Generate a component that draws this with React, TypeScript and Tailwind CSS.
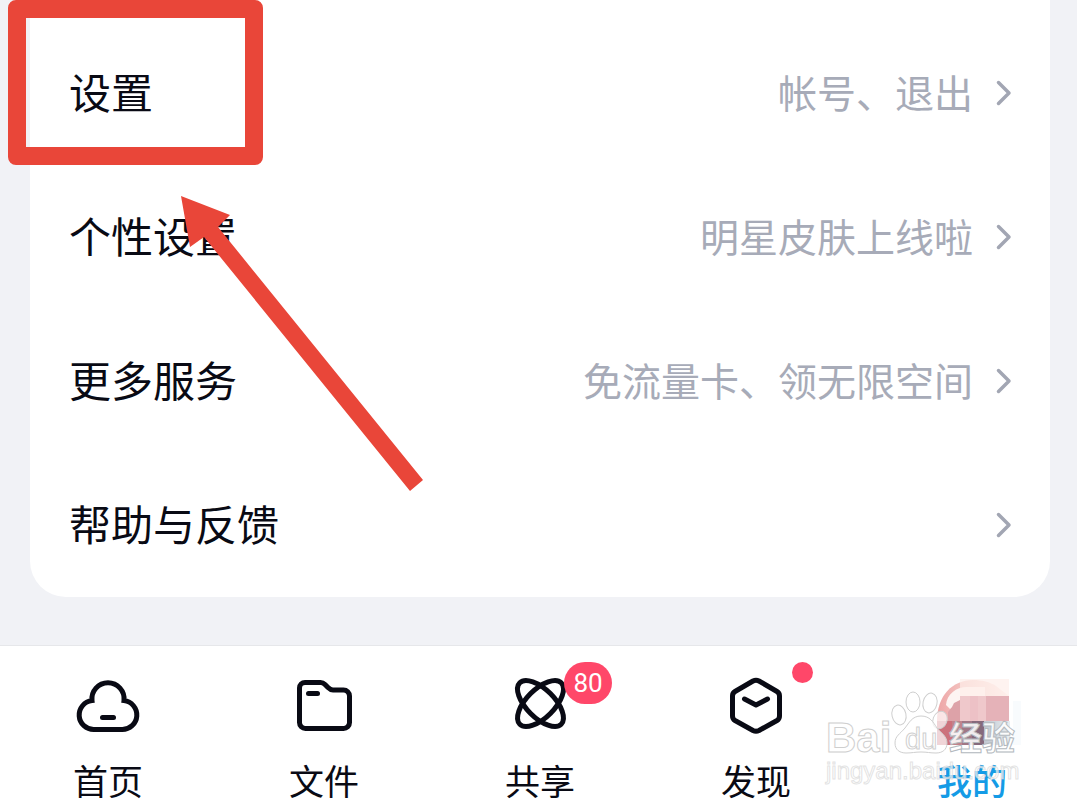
import React, { useState } from 'react';
import { clsx } from 'clsx';

interface MenuItem {
  title: string;
  note?: string;
}

const menuItems: MenuItem[] = [
  { title: '设置', note: '帐号、退出' },
  { title: '个性设置', note: '明星皮肤上线啦' },
  { title: '更多服务', note: '免流量卡、领无限空间' },
  { title: '帮助与反馈' },
];

const iconProps = {
  viewBox: '0 0 64 64',
  fill: 'none',
  stroke: 'currentColor',
  strokeWidth: 5,
  strokeLinecap: 'round' as const,
  strokeLinejoin: 'round' as const,
  className: 'size-16 overflow-visible',
  'aria-hidden': true,
};

const CloudIcon = () => (
  <svg {...iconProps}>
    <path d="M18 55.5h28a14.5 14.5 0 0 0 2-28.9A16.1 16.1 0 1 0 16 26.6A14.5 14.5 0 0 0 18 55.5z" strokeLinejoin="miter" />
    <path d="M26.5 43.5h11" />
  </svg>
);

const FolderIcon = () => (
  <svg {...iconProps}>
    <path d="M13 8.5h15.5c2 0 3 .5 4.5 2l3 3c1.5 1.5 2.5 2.5 5 2.5h10.5a6 6 0 0 1 6 6v26.5a6 6 0 0 1-6 6H13.5a6 6 0 0 1-6-6V14a5.5 5.5 0 0 1 5.5-5.5z" />
    <path d="M16.5 19.5h9" />
  </svg>
);

const ShareIcon = () => (
  <svg {...iconProps}>
    <ellipse cx="32.5" cy="29.5" rx="29.3" ry="14" transform="rotate(45 32.5 29.5)" />
    <ellipse cx="32.5" cy="29.5" rx="29.3" ry="14" transform="rotate(-45 32.5 29.5)" />
  </svg>
);

const DiscoverIcon = () => (
  <svg {...iconProps}>
    <path d="M29 7q3-1.500 6 0L53 17.500q2.500 1.500 2.500 4.500V42q0 3-2.500 4.500L35 56.500q-3 1.500-6 0L11 46.500q-2.500-1.500-2.500-4.500V22q0-3 2.500-4.500z" />
    <path d="M20.500 25L32 31l11.500-6" />
  </svg>
);

// Pixelated avatar
const AvatarIcon = () => (
  <svg viewBox="0 0 64 64" className="size-16 overflow-visible" aria-hidden="true">
    <defs>
      <linearGradient id="ring" x1="0" y1="0" x2="1" y2="0">
        <stop offset="0" stopColor="#eda5a6" />
        <stop offset="0.5" stopColor="#f6cfca" />
        <stop offset="1" stopColor="#fdf0ec" />
      </linearGradient>
      <linearGradient id="fade" x1="0" y1="0" x2="1" y2="0">
        <stop offset="0" stopColor="#bfc6d0" />
        <stop offset="1" stopColor="#e8eef1" />
      </linearGradient>
    </defs>
    <path d="M-3 47C-3 22 12 6 33 6c9 0 17 2 23 6l13 10v25z" fill="url(#ring)" />
    <path d="M6 31C7 20 16 13 27 13h18v10H22l-2 7-10 5z" fill="#fdf4f2" />
    <path d="M8 47V38l4-5 2-4 6-3v21z" fill="#dda2a8" />
    <rect x="20" y="5" width="49" height="17" fill="#fdeee9" opacity="0.7" />
    <rect x="20" y="22" width="26" height="25" fill="#efc8cb" />
    <rect x="30" y="22" width="8" height="25" fill="#edc1c6" />
    <rect x="46" y="22" width="23" height="25" fill="#e5b2b8" />
    <rect x="-3" y="47" width="15" height="24" fill="#cc727c" />
    <rect x="12" y="47" width="10" height="24" fill="#c1838c" />
    <rect x="22" y="47" width="10" height="24" fill="#a07886" />
    <rect x="32" y="47" width="12" height="24" fill="#856a7c" />
    <rect x="44" y="47" width="26" height="24" fill="url(#fade)" />
    <rect x="73" y="27" width="8" height="44" fill="#f8fbfd" />
  </svg>
);

const tabs = [
  { label: '首页', Icon: CloudIcon },
  { label: '文件', Icon: FolderIcon },
  { label: '共享', Icon: ShareIcon, count: 80 },
  { label: '发现', Icon: DiscoverIcon, dot: true },
  { label: '我的', Icon: AvatarIcon },
];

const ChevronIcon = () => (
  <svg viewBox="0 0 16 26" className="h-[26px] w-4" fill="none" stroke="#a2a6b3" strokeWidth="3.5" strokeLinecap="round" strokeLinejoin="round" aria-hidden="true">
    <path d="M2.500 2.500l10.500 10.500L2.500 23.500" />
  </svg>
);

const Watermark = () => (
  <svg
    viewBox="0 0 200 96"
    className="pointer-events-none absolute right-[55px] bottom-[21px] h-24 w-[200px] overflow-visible font-['Liberation_Sans','Noto_Sans_CJK_SC',sans-serif]"
    fill="#ffffff"
    fillOpacity="0.7"
    stroke="#cfcfcf"
    strokeWidth="1"
    aria-hidden="true"
  >
    <text x="4" y="62" fontSize="42" fontWeight="700">Bai</text>
    <ellipse cx="77" cy="25" rx="7" ry="10" transform="rotate(-12 77 25)" />
    <ellipse cx="91" cy="12" rx="7" ry="10" />
    <ellipse cx="108" cy="13" rx="7" ry="10" transform="rotate(12 108 13)" />
    <ellipse cx="118" cy="30" rx="7" ry="9" transform="rotate(20 118 30)" />
    <path d="M99 26c-9 0-12 7-16 12-5 6-10 8-10 15 0 7 5 10 11 10 6 0 9-1 15-1s9 1 15 1c6 0 11-3 11-10 0-7-6-10-10-15-4-6-7-12-16-12z" />
    <text x="83" y="59" fontSize="29">du</text>
    <text x="127" y="60" fontSize="33" fontWeight="700" stroke="#b3b9be" fillOpacity="0.9">经验</text>
    <text x="4" y="89" fontSize="24" strokeOpacity="0.6">jingyan.baidu.com</text>
  </svg>
);

const App: React.FC = () => {
  const [active, setActive] = useState('我的');

  return (
    <div className="relative flex min-h-screen flex-col overflow-hidden bg-[#f1f2f6] font-['Noto_Sans_CJK_SC',sans-serif] text-[#090a14]">
      <main className="flex-1 pr-[27px] pb-12 pl-[30px]">
        <ul className="rounded-b-[36px] bg-white pt-[21px]">
          {menuItems.map(item => (
            <li key={item.title}>
              <button className="flex h-36 w-full items-center justify-between pr-[38px] pl-[39px]">
                <span className="pb-1 text-[42px] leading-[60px]">{item.title}</span>
                <span className="flex items-center gap-[23px] text-[39px] leading-[56px] text-[#a7abb8]">
                  <span className="pb-1">{item.note}</span>
                  <ChevronIcon />
                </span>
              </button>
            </li>
          ))}
        </ul>
      </main>

      <nav className="relative border-t border-[#e6e7ea] bg-white">
        <div className="grid w-[calc(100%+3px)] grid-cols-5">
          {tabs.map(({ label, Icon, count, dot }) => (
            <button key={label} onClick={() => setActive(label)} className="flex flex-col items-center gap-5 pt-7 pb-[5px]">
              <span className="relative">
                <Icon />
                {count && (
                  <span className="absolute -top-3 left-14 flex h-[42px] w-12 items-center justify-center rounded-full bg-[#ff4769] font-[Roboto,sans-serif] text-[26px] text-white">
                    {count}
                  </span>
                )}
                {dot && <span className="absolute -top-3 left-17 size-[21px] rounded-full bg-[#ff4769]" />}
              </span>
              <span className={clsx('text-[35px] leading-[44px]', active === label && 'font-medium text-[#149be6]')}>
                {label}
              </span>
            </button>
          ))}
        </div>
        <Watermark />
      </nav>

      {/* Tutorial callout: frame round the first row and an arrow to it */}
      <div className="pointer-events-none absolute top-0 left-2 h-[165px] w-[255px] rounded-lg border-18 border-[#e94639]" />
      <svg viewBox="0 0 244 297" className="pointer-events-none absolute top-[196px] left-[180px] h-[297px] w-[244px]" aria-hidden="true">
        <path d="M1 0L50 19L38 31L243 284L230 295L24 41L10 51Z" fill="#e94639" />
      </svg>
    </div>
  );
};

export default App;
